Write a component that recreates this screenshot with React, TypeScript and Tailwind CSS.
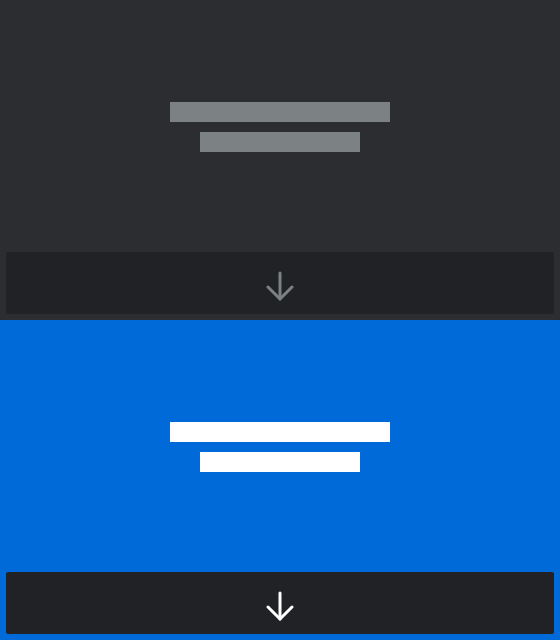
import React from "react";

function ArrowDown({ color }: { color: string }) {
  return (
    <svg viewBox="0 0 30 30" className="w-[30px] h-[30px]" fill="none" stroke={color} strokeWidth="3" strokeLinecap="round" strokeLinejoin="round">
      <path d="M15 2v26" />
      <path d="M3 16l12 12 12-12" />
    </svg>
  );
}

function Card({ variant }: { variant: "dark" | "blue" }) {
  const dark = variant === "dark";
  return (
    <div className={`h-[320px] flex flex-col px-[6px] pb-[6px] ${dark ? "bg-[#2b2d31]" : "bg-[#006ad8]"}`}>
      <div className="flex-1 flex flex-col items-center justify-center gap-[10px] pt-[2px]">
        <div className={`w-[220px] h-[20px] ${dark ? "bg-[#7c8184]" : "bg-white"}`} />
        <div className={`w-[160px] h-[20px] ${dark ? "bg-[#7c8184]" : "bg-white"}`} />
      </div>
      <div className="h-[62px] rounded-[2px] bg-[#212226] flex items-center justify-center pt-[6px]">
        <ArrowDown color={dark ? "#7c8184" : "#ffffff"} />
      </div>
    </div>
  );
}

export default function App() {
  return (
    <div className="w-[560px] h-[640px] flex flex-col">
      <Card variant="dark" />
      <Card variant="blue" />
    </div>
  );
}
